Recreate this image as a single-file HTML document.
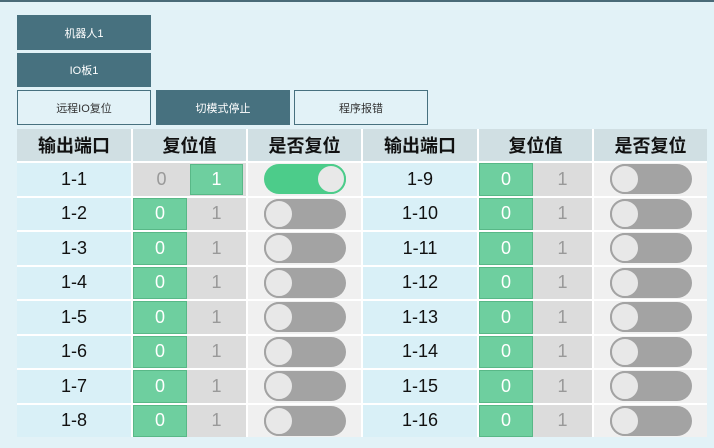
<!DOCTYPE html>
<html><head><meta charset="utf-8"><style>
*{margin:0;padding:0;box-sizing:border-box}
body{width:714px;height:448px;background:#e2f2f7;position:relative;overflow:hidden;font-family:"Liberation Sans","Noto Sans CJK SC",sans-serif}
.top{position:absolute;left:0;top:0;width:714px;height:2px;background:#4a6b78}
.btn{position:absolute;height:35px;width:134px;font-size:11px;display:flex;align-items:center;justify-content:center;color:#fff;background:#47717f}
.btn.o{background:#e2f2f7;border:1px solid #47717f;color:#333}
.grid{position:absolute;left:17px;top:129px;width:690px;background:#fff;display:grid;grid-template-columns:114px 113px 113px 114px 113px 113px;column-gap:2px;row-gap:2px;grid-template-rows:32px repeat(8,32.5px)}
.h{background:#d0dfe3;font-weight:bold;font-size:18px;display:flex;align-items:center;justify-content:center;color:#111}
.p{background:#d9f0f7;font-size:18px;display:flex;align-items:center;justify-content:center;color:#111}
.v{display:flex;background:#dcdcdc}
.v div{flex:1;display:flex;align-items:center;justify-content:center;font-size:18px;color:#999}
.v .g{background:#6ecf9f;color:#fff;border:1px solid #58b887;flex:0 0 54px}
.v .g2{flex:0 0 53px;margin:1px 3px 1px 0}
.t{background:#f0f0f0;display:flex;align-items:center;justify-content:center}
.sw{width:82px;height:30px;border-radius:15px;background:#a3a3a3;position:relative}
.sw:before{content:"";position:absolute;left:0;top:0;width:30px;height:30px;border-radius:50%;background:#e8e8e8;border:2px solid #a3a3a3;box-sizing:border-box}
.sw.on{background:#4ccc8a}
.sw.on:before{left:52px;border-color:#4ccc8a}
</style></head><body>
<div class="top"></div>
<div class="btn" style="left:17px;top:15px">机器人1</div>
<div class="btn" style="left:17px;top:53px;height:34px">IO板1</div>
<div class="btn o" style="left:17px;top:90px">远程IO复位</div>
<div class="btn" style="left:156px;top:90px">切模式停止</div>
<div class="btn o" style="left:294px;top:90px">程序报错</div>
<div class="grid">
<div class="h">输出端口</div><div class="h">复位值</div><div class="h">是否复位</div><div class="h">输出端口</div><div class="h">复位值</div><div class="h">是否复位</div>

<div class="p">1-1</div><div class="v"><div>0</div><div class="g g2">1</div></div><div class="t"><div class="sw on"></div></div>
<div class="p">1-9</div><div class="v"><div class="g">0</div><div>1</div></div><div class="t"><div class="sw"></div></div>

<div class="p">1-2</div><div class="v"><div class="g">0</div><div>1</div></div><div class="t"><div class="sw"></div></div>
<div class="p">1-10</div><div class="v"><div class="g">0</div><div>1</div></div><div class="t"><div class="sw"></div></div>

<div class="p">1-3</div><div class="v"><div class="g">0</div><div>1</div></div><div class="t"><div class="sw"></div></div>
<div class="p">1-11</div><div class="v"><div class="g">0</div><div>1</div></div><div class="t"><div class="sw"></div></div>

<div class="p">1-4</div><div class="v"><div class="g">0</div><div>1</div></div><div class="t"><div class="sw"></div></div>
<div class="p">1-12</div><div class="v"><div class="g">0</div><div>1</div></div><div class="t"><div class="sw"></div></div>

<div class="p">1-5</div><div class="v"><div class="g">0</div><div>1</div></div><div class="t"><div class="sw"></div></div>
<div class="p">1-13</div><div class="v"><div class="g">0</div><div>1</div></div><div class="t"><div class="sw"></div></div>

<div class="p">1-6</div><div class="v"><div class="g">0</div><div>1</div></div><div class="t"><div class="sw"></div></div>
<div class="p">1-14</div><div class="v"><div class="g">0</div><div>1</div></div><div class="t"><div class="sw"></div></div>

<div class="p">1-7</div><div class="v"><div class="g">0</div><div>1</div></div><div class="t"><div class="sw"></div></div>
<div class="p">1-15</div><div class="v"><div class="g">0</div><div>1</div></div><div class="t"><div class="sw"></div></div>

<div class="p">1-8</div><div class="v"><div class="g">0</div><div>1</div></div><div class="t"><div class="sw"></div></div>
<div class="p">1-16</div><div class="v"><div class="g">0</div><div>1</div></div><div class="t"><div class="sw"></div></div>
</div>
</body></html>
